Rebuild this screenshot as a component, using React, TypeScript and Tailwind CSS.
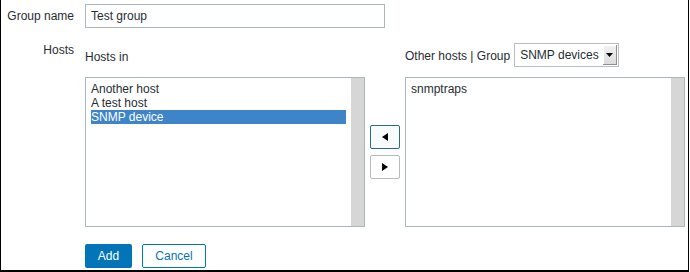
import React from "react";

const hostsIn = ["Another host", "A test host", "SNMP device"];
const otherHosts = ["snmptraps"];

const ListBox = ({ items, selected }: { items: string[]; selected?: string }) => (
  <div className="flex h-[150px] border border-[#acb6bd] bg-white">
    <div className="flex-1 px-[5px] pt-[4px]">
      {items.map((item) => (
        <div
          key={item}
          className={
            item === selected
              ? "h-[14px] leading-[14px] bg-[#3d84c9] text-white"
              : "h-[14px] leading-[14px] text-[#1f2c33]"
          }
        >
          {item}
        </div>
      ))}
    </div>
    <div className="w-[13px] bg-[#d6d6d6]" />
  </div>
);

const ArrowButton = ({ dir, focused }: { dir: "left" | "right"; focused?: boolean }) => (
  <button
    className={
      focused
        ? "flex h-[24px] w-[30px] items-center justify-center rounded-[2px] border border-[#2d6a86] bg-[#f7fbfd]"
        : "flex h-[24px] w-[30px] items-center justify-center rounded-[2px] border border-[#b4bcc1] bg-white"
    }
  >
    <svg width="6" height="8" viewBox="0 0 6 8">
      {dir === "left" ? (
        <polygon points="6,0 6,8 0,4" fill="#000" />
      ) : (
        <polygon points="0,0 0,8 6,4" fill="#000" />
      )}
    </svg>
  </button>
);

export default function App() {
  return (
    <div className="h-[272px] w-[690px] bg-white font-['Liberation_Sans',Arial,sans-serif] text-[12px] text-[#1f2c33]">
      <div className="h-[272px] w-[689px] border-b-2 border-l border-r border-black pt-[4px]">
        <div className="flex items-center gap-[11px]">
          <div className="w-[73px] text-right">Group name</div>
          <div className="flex h-[24px] w-[300px] items-center border border-[#acb6bd] px-[5px]">
            Test group
          </div>
        </div>

        <div className="mt-[15px] flex gap-[11px]">
          <div className="w-[73px] pt-[0px] text-right leading-[14px]">Hosts</div>
          <div>
            <div className="grid grid-cols-[280px_30px_280px] gap-x-[5px] gap-y-[10px]">
              <div className="flex h-[24px] items-center pt-[3px]">Hosts in</div>
              <div />
              <div className="flex h-[24px] items-center gap-[4px]">
                <span className="pt-[1px]">Other hosts | Group</span>
                <div className="flex h-[24px] w-[105px] items-center border border-[#b8bec2] bg-white pl-[5px]">
                  <span className="flex-1">SNMP devices</span>
                  <div className="mr-[1px] flex h-[20px] w-[14px] items-center justify-center border-b border-r border-[#8f8f8f] bg-[linear-gradient(#f2f2f2,#dcdcdc)] shadow-[inset_1px_1px_0_#fff]">
                    <svg width="7" height="4" viewBox="0 0 7 4">
                      <polygon points="0,0 7,0 3.5,4" fill="#000" />
                    </svg>
                  </div>
                </div>
              </div>

              <ListBox items={hostsIn} selected="SNMP device" />
              <div className="flex flex-col gap-[6px] pt-[48px]">
                <ArrowButton dir="left" focused />
                <ArrowButton dir="right" />
              </div>
              <ListBox items={otherHosts} />
            </div>

            <div className="mt-[17px] flex gap-[10px]">
              <button className="h-[24px] w-[47px] rounded-[2px] bg-[#0275b8] text-white">Add</button>
              <button className="h-[24px] w-[64px] rounded-[2px] border border-[#0275b8] bg-white text-[#0275b8]">
                Cancel
              </button>
            </div>
          </div>
        </div>
      </div>
    </div>
  );
}
